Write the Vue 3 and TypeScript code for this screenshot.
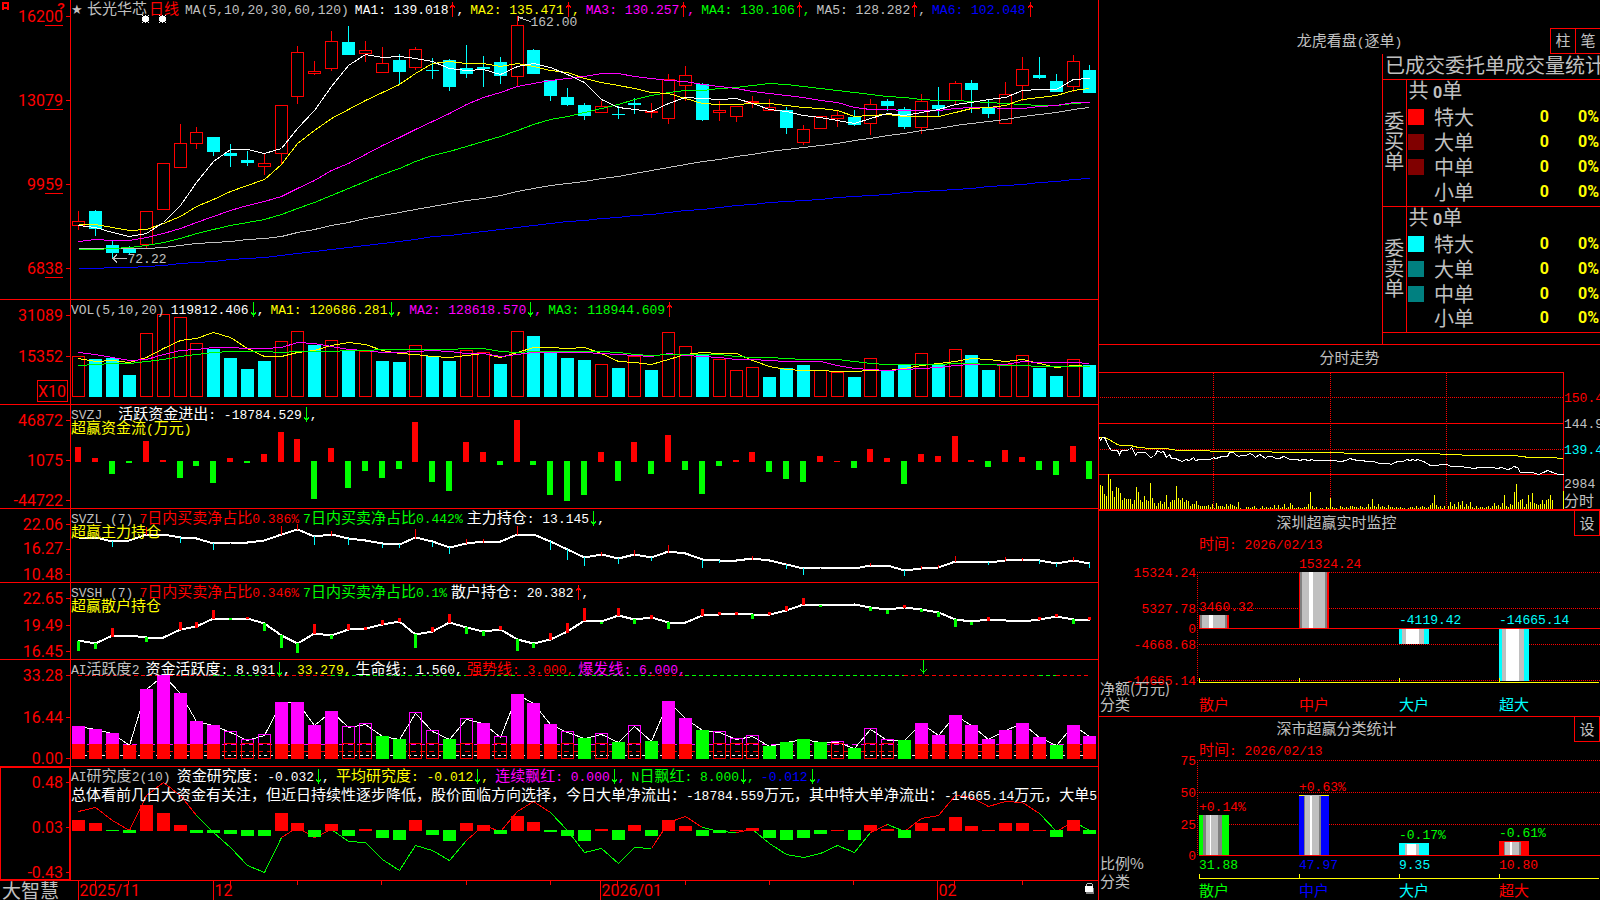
<script setup lang="ts">
import { h } from 'vue'

type Seg = { t: string; c: string; a?: 'up' | 'down'; comma?: boolean }
type Shape = { x: number; y: number; w: number; h: number; f: string; s?: string }
type Line = { p: string; c: string; w?: number; d?: string }
type Tick = { y: number; t: string; u?: boolean }
interface Panel {
  id: string
  top: number
  height: number
  title: string
  gap?: boolean
  segs: Seg[]
  sub?: string
  note?: string
  ticks: Tick[]
  under: Line[]
  shapes: Shape[]
  over: Line[]
}

const RED = '#ff0000'
const CYAN = '#00ffff'
const GREEN = '#00ff00'
const YELLOW = '#ffff00'
const MAGENTA = '#ff00ff'
const BLUE = '#0000ff'
const WHITE = '#ffffff'
const SILVER = '#c0c0c0'
const GRAY = '#808080'

/* Splits a label into CJK and Latin runs, each with its own face and size. */
const Mixed = (props: { t: string }) =>
  (props.t.match(/[\u2e80-\uffef]+|[^\u2e80-\uffef]+/g) ?? []).map((run) =>
    h('span', { class: /[\u2e80-\uffef]/.test(run) ? 'run-cjk' : 'run-latin' }, run),
  )
Mixed.props = ['t']

const LEFT = 71
const PLOT = 1027
const xAt = (i: number) => Math.round(78.4 + 16.85 * i)
const nums = (s: string) => s.trim().split(/[\s,]+/).map(Number)
/* Series are kept on a grid of three steps per row; base is the first row. */
const row = (v: number, base: number) => Math.round(base + v / 3)
const path = (v: number[], base: number, from = 0) =>
  v.map((y, i) => `${xAt(i + from) + 0.5},${Math.floor(base + y / 3) + 0.5}`).join(' ')

/* ---------- candles ---------- */
const candles = `r 633 667 677 689|c 630 633 687 708|c 722 735 759 777|c 738 744 759 766|r 637 637 734 743|r 493 493 631 631|r 372 433 505 505|r 381 400 433 447|c 411 411 456 468|c 432 459 468 501|c 453 480 489 498|r 460 493 502 525|r 319 319 463 493|r 138 160 292 311|r 183 216 221 224|r 93 127 208 213|c 78 126 165 165|r 123 154 163 186|r 141 193 220 220|c 162 180 216 252|r 141 151 205 209|c 174 210 213 237|c 177 180 261 273|c 135 204 222 234|c 168 201 207 261|c 171 186 228 252|r 48 79 232 258|c 147 150 222 222|c 240 240 288 303|c 264 291 315 318|c 309 315 348 360|r 303 322 340 340|c 318 342 345 357|c 294 309 315 342|r 309 336 339 354|r 222 241 358 372|r 198 229 259 303|c 249 252 360 363|r 303 334 340 363|r 317 322 352 366|r 288 307 309 324|r 297 325 334 334|c 321 330 384 402|r 375 391 430 435|r 348 352 388 388|r 330 349 358 381|c 330 351 375 378|r 297 316 373 405|c 297 303 318 333|c 321 327 381 387|r 282 307 385 402|c 261 315 327 348|r 243 253 304 315|c 240 249 270 339|c 300 324 342 354|r 246 286 373 373|r 171 211 259 303|c 171 225 234 237|c 222 243 276 276|r 165 187 262 276|c 195 210 279 279`
const priceShapes: Shape[] = candles.split('|').flatMap((line, i) => {
  const [kind, ...rest] = line.split(' ')
  const [hi, top, bot, lo] = rest.map((v) => row(+v, 0))
  const x = xAt(i)
  if (kind === 'c') {
    return [
      { x, y: hi, w: 1, h: lo - hi, f: CYAN },
      { x: x - 6, y: top, w: 13, h: Math.max(1, bot - top), f: CYAN },
    ]
  }
  return [
    { x, y: hi, w: 1, h: top - hi, f: RED },
    { x, y: bot, w: 1, h: lo - bot, f: RED },
    { x: x - 5.5, y: top - 0.5, w: 12, h: Math.max(1, bot - top), f: 'none', s: RED },
  ]
})
const ma = [
  [WHITE, '676 682 696 710 699 667 615 546 485 448 448 460 445 385 332 260 196 163 172 169 175 184 205 211 208 222 198 190 203 223 247 297 322 328 334 310 292 295 298 295 311 328 334 346 352 361 370 355 340 346 337 328 314 307 299 292 270 268 268 238 235'],
  [YELLOW, '673 674 682 691 688 670 648 619 598 573 556 538 492 430 390 354 328 302 277 252 220 190 184 190 190 198 190 198 210 217 235 247 256 265 277 280 295 310 314 314 310 310 316 322 325 332 349 346 343 348 349 349 338 325 322 316 298 292 286 270 265'],
  [MAGENTA, '724 718 721 721 712 700 684 666 648 630 615 604 588 564 540 512 489 462 436 413 387 363 339 312 291 277 259 249 241 236 228 220 220 229 235 241 244 253 259 265 275 280 287 293 302 308 323 328 329 331 331 331 325 322 322 325 325 319 315 308 307'],
  [GREEN, '747 747 745 742 737 727 715 700 687 675 667 657 642 624 606 585 564 545 524 504 484 466 454 439 424 409 391 373 359 348 337 326 313 298 286 278 271 271 266 262 257 251 253 259 265 271 277 284 289 293 298 301 301 304 307 310 313 316 317 310 307'],
  [SILVER, '745 745 745 745 745 742 736 730 727 723 718 714 708 697 688 677 667 656 646 637 628 619 611 602 595 587 574 565 556 549 544 535 528 520 511 502 493 485 479 470 463 455 448 442 436 429 421 414 406 399 390 384 377 370 365 357 350 343 336 328 322'],
  [BLUE, '805 804 802 802 800 796 791 787 783 778 775 771 765 759 753 747 741 736 730 724 717 710 706 700 694 688 682 677 670 665 661 655 652 646 642 636 631 627 621 617 612 608 603 600 597 593 588 585 582 578 573 570 568 564 559 556 552 547 544 538 535'],
].reverse().map(([c, v]): Line => ({ c, p: path(nums(v), 0) }))

/* ---------- volume ---------- */
const vol = 'r202 c207 c204 c255 r133 r76 r85 r163 c177 c204 c237 c213 r157 r127 c165 r154 c180 r187 c213 c216 r169 c199 c213 r184 r190 c222 r127 c138 c184 c204 c210 r226 c234 r202 c240 r130 r172 c195 r211 r244 r235 c261 c234 c225 r244 r250 c261 r208 c240 c223 r193 c223 r181 c195 c240 r226 r199 c234 c258 r211 c225'
const volShapes: Shape[] = vol.split(' ').map((s, i) => {
  const y = row(+s.slice(1), 290)
  const x = xAt(i)
  return s[0] === 'c'
    ? { x: x - 6, y, w: 13, h: 397 - y, f: CYAN }
    : { x: x - 5.5, y: y - 0.5, w: 12, h: 397 - y, f: 'none', s: RED }
})
const volLines = [
  [YELLOW, '205 213 211 216 203 175 152 145 127 142 175 198 200 187 182 165 157 163 180 190 193 199 202 196 190 202 187 173 172 175 172 190 213 217 223 208 194 187 190 191 212 230 238 241 241 244 244 241 242 236 226 220 214 205 208 214 208 220 233 226 228'],
  [MAGENTA, '187 193 203 212 207 192 182 178 173 173 176 176 172 158 160 168 178 182 186 188 183 181 185 190 190 200 193 187 186 186 186 190 194 196 199 190 196 198 203 208 209 212 214 214 214 226 235 238 241 238 235 232 226 223 222 222 214 217 217 217 220'],
  [GREEN, '226 222 219 220 213 207 199 193 187 184 184 184 188 185 184 184 181 181 178 178 178 178 178 175 175 184 187 185 184 184 184 184 187 193 196 193 193 193 194 198 201 203 204 207 208 209 214 220 223 223 223 223 220 220 223 226 226 228 229 229 229'],
].map(([c, v]): Line => ({ c, p: path(nums(v), 290) }))

/* ---------- money flow ---------- */
const flow: Shape[] = nums('471 504 552 519 453 510 564 528 579 504 519 492 426 447 627 474 594 543 564 537 396 576 603 456 486 525 390 525 615 633 615 486 573 456 552 435 540 612 528 510 486 546 567 576 498 513 534 477 504 582 492 498 438 510 531 480 501 540 555 468 567').map((v, i) => {
  const y = row(v, 290)
  const x = xAt(i) - 3
  return v < 515 ? { x, y, w: 6, h: 462 - y, f: RED } : { x, y: 461, w: 6, h: y - 461, f: GREEN }
})

/* ---------- holdings ---------- */
const stems = (s: string, line: number[], base: number, w: number, down: string): Shape[] =>
  s.split(' ').map((e) => {
    const [i, v] = e.split(':').map(Number)
    const a = row(v, base)
    const b = row(line[i], base)
    return { x: xAt(i) - (w >> 1), y: Math.min(a, b), w, h: Math.abs(a - b) + 1, f: a < b ? RED : down }
  })
const major = nums('741 742 754 752 733 733 742 745 760 758 756 752 732 718 738 734 745 751 761 763 743 755 772 760 755 755 733 733 753 778 801 794 804 794 802 785 790 809 810 811 806 810 823 834 831 832 834 825 825 840 835 832 813 814 817 810 809 810 820 811 819')
const majorStems = stems('2:768 4:712 6:755 8:777 12:708 13:702 14:761 15:723 16:761 18:770 19:771 20:717 21:767 22:789 23:747 24:747 26:708 28:777 29:807 30:825 31:786 32:819 33:780 34:810 35:765 37:831 38:815 40:798 42:819 42:834 43:852 47:819 49:855 50:828 51:825 52:798 54:822 55:801 56:804 57:818 58:828 59:801 60:831', major, 290, 1, CYAN)
const retail = nums('212 219 197 196 201 201 178 170 145 145 145 160 195 220 190 195 177 176 163 153 192 184 157 172 184 178 208 220 207 185 150 155 136 147 143 156 156 136 132 131 133 133 121 102 104 105 104 112 119 112 118 127 147 155 149 151 153 148 139 147 147')
const retailStems = stems('0:240 1:234 2:174 4:213 6:156 7:156 8:120 9:148 10:142 11:180 12:231 13:246 14:162 15:204 16:162 17:171 18:150 19:144 20:231 21:171 22:132 23:189 24:195 25:168 26:240 27:231 28:189 29:159 30:114 31:159 32:114 33:159 34:135 35:174 37:117 38:126 39:126 40:144 41:126 42:108 43:84 44:108 47:120 48:129 49:105 50:123 51:138 52:168 53:162 54:141 57:141 58:132 59:159 60:141', retail, 570, 3, GREEN)

/* ---------- activity ---------- */
const act = 'M468 M477 M489 M525 M357 M315 M369 M453 M465 H487 H511 H496 M396 M396 M465 M423 H472 H463 G498 G507 H430 H484 G507 H448 M459 H502 M372 M399 M462 H487 G504 H493 G516 H469 G513 M393 M444 G480 H487 H508 H499 G528 G516 G507 G516 H517 G534 H478 H511 G510 M459 M495 M435 M465 M507 M480 M459 M501 G525 M465 M498'.split(' ')
const SPLIT = 744
const FLOOR = 759
const actShapes: Shape[] = act.flatMap((s, i): Shape[] => {
  const y = row(+s.slice(1), 570)
  const x = xAt(i) - 6
  if (s[0] === 'G') return [{ x, y, w: 13, h: FLOOR - y, f: GREEN }]
  if (s[0] === 'M') {
    const mid = Math.max(y, SPLIT)
    return [
      { x, y, w: 13, h: mid - y, f: MAGENTA },
      { x, y: mid, w: 13, h: FLOOR - mid, f: RED },
    ]
  }
  return [
    { x: x + 0.5, y: y - 0.5, w: 12, h: SPLIT - y, f: 'none', s: MAGENTA },
    { x: x + 0.5, y: SPLIT - 0.5, w: 12, h: FLOOR - SPLIT, f: 'none', s: RED },
  ]
})
const span = (a: number, b: number, y: number) => `${xAt(a)},${y + 0.5} ${xAt(b)},${y + 0.5}`
const capStops: [number, number, string][] = [
  [0, 8, RED], [8, 11, GREEN], [11, 15, RED], [15, 23, GREEN], [23, 24, RED], [24, 26, GREEN], [26, 28, RED],
  [28, 34, GREEN], [34, 36, RED], [36, 49, GREEN], [49, 57, RED], [57, 58, GREEN], [58, 60, RED],
]
const actUnder: Line[] = [
  { c: MAGENTA, p: span(0, 60, 744), d: '5 4' },
  { c: RED, p: span(0, 60, 751), d: '5 4' },
  { c: WHITE, p: span(0, 60, 755), d: '3 3' },
  ...capStops.map(([a, b, c]): Line => ({ c, p: span(a, b, 675), d: '4 3' })),
  { c: WHITE, p: path(act.map((s) => +s.slice(1)), 570) },
]

/* ---------- research ---------- */
const research: Shape[] = nums('750 759 783 789 705 729 765 789 789 792 798 798 729 759 801 762 798 777 804 810 750 795 813 759 765 792 738 756 786 798 813 777 810 765 798 750 768 798 789 780 774 804 810 804 792 780 810 765 777 804 759 774 741 768 780 759 759 780 801 750 792').map((v, i) => {
  const y = row(v, 570)
  const x = xAt(i) - 6
  return v < 782 ? { x, y, w: 13, h: 831 - y, f: RED } : { x, y: 830, w: 13, h: y - 830, f: GREEN }
})
const trend = nums('724 712 750 781 675 637 675 737 786 831 885 908 803 771 803 778 813 818 868 902 825 840 871 812 765 785 725 695 727 782 848 835 880 832 835 757 738 773 785 788 779 820 853 862 849 826 848 788 763 784 745 736 676 681 709 694 698 730 784 755 781')
const trendStops: [number, number, string][] = [
  [0, 7, RED], [7, 12, GREEN], [12, 15, RED], [15, 23, GREEN], [23, 28, RED], [28, 34, GREEN], [34, 37, RED], [37, 39, GREEN],
  [39, 40, RED], [40, 47, GREEN], [47, 48, RED], [48, 49, GREEN], [49, 57, RED], [57, 58, GREEN], [58, 59, RED], [59, 60, GREEN],
]
const trendLines = trendStops.map(([a, b, c]): Line => ({ c, p: path(trend.slice(a, b + 1), 570, a) }))

const panels: Panel[] = [
  {
    id: 'price', top: 0, height: 299, title: 'MA(5,10,20,30,60,120)',
    segs: [
      { t: 'MA1: 139.018', c: WHITE, a: 'up', comma: true },
      { t: 'MA2: 135.471', c: YELLOW, a: 'up', comma: true },
      { t: 'MA3: 130.257', c: MAGENTA, a: 'up', comma: true },
      { t: 'MA4: 130.106', c: GREEN, a: 'up', comma: true },
      { t: 'MA5: 128.282', c: SILVER, a: 'up', comma: true },
      { t: 'MA6: 102.048', c: BLUE, a: 'up' },
    ],
    ticks: [{ y: 16, t: '16200', u: true }, { y: 100, t: '13079', u: true }, { y: 184, t: '9959', u: true }, { y: 268, t: '6838', u: true }],
    under: [], shapes: priceShapes, over: ma,
  },
  {
    id: 'volume', top: 299, height: 105, title: 'VOL(5,10,20)',
    segs: [
      { t: '119812.406', c: WHITE, a: 'down', comma: true },
      { t: 'MA1: 120686.281', c: YELLOW, a: 'down', comma: true },
      { t: 'MA2: 128618.570', c: MAGENTA, a: 'down', comma: true },
      { t: 'MA3: 118944.609', c: GREEN, a: 'up' },
    ],
    ticks: [{ y: 315, t: '31089' }, { y: 356, t: '15352' }],
    under: [], shapes: volShapes, over: volLines,
  },
  {
    id: 'flow', top: 404, height: 104, title: 'SVZJ', gap: true,
    segs: [{ t: '活跃资金进出: -18784.529', c: WHITE, a: 'down', comma: true }],
    sub: '超赢资金流(万元)',
    ticks: [{ y: 420, t: '46872' }, { y: 460, t: '1075' }, { y: 500, t: '-44722' }],
    under: [], shapes: flow, over: [],
  },
  {
    id: 'major', top: 508, height: 74, title: 'SVZL (7)',
    segs: [
      { t: '7日内买卖净占比0.386%', c: RED },
      { t: '7日内买卖净占比0.442%', c: GREEN },
      { t: '主力持仓: 13.145', c: WHITE, a: 'down', comma: true },
    ],
    sub: '超赢主力持仓',
    ticks: [{ y: 524, t: '22.06' }, { y: 549, t: '16.27' }, { y: 574, t: '10.48' }],
    under: [{ c: WHITE, w: 2, p: path(major, 290) }], shapes: majorStems, over: [],
  },
  {
    id: 'retail', top: 582, height: 77, title: 'SVSH (7)',
    segs: [
      { t: '7日内买卖净占比0.346%', c: RED },
      { t: '7日内买卖净占比0.1%', c: GREEN },
      { t: '散户持仓: 20.382', c: WHITE, a: 'up', comma: true },
    ],
    sub: '超赢散户持仓',
    ticks: [{ y: 598, t: '22.65' }, { y: 625, t: '19.49' }, { y: 651, t: '16.45' }],
    under: [{ c: WHITE, w: 2, p: path(retail, 570) }], shapes: retailStems, over: [],
  },
  {
    id: 'activity', top: 659, height: 107, title: 'AI活跃度2',
    segs: [
      { t: '资金活跃度: 8.931', c: WHITE, a: 'down', comma: true },
      { t: '33.279,', c: YELLOW },
      { t: '生命线: 1.560,', c: WHITE },
      { t: '强势线: 3.000,', c: RED },
      { t: '爆发线: 6.000,', c: MAGENTA },
    ],
    ticks: [{ y: 675, t: '33.28' }, { y: 717, t: '16.44' }, { y: 758, t: '0.00' }],
    under: actUnder, shapes: actShapes, over: [],
  },
  {
    id: 'research', top: 766, height: 114, title: 'AI研究度2(10)',
    segs: [
      { t: '资金研究度: -0.032', c: WHITE, a: 'down', comma: true },
      { t: '平均研究度: -0.012', c: YELLOW, a: 'down', comma: true },
      { t: '连续飘红: 0.000', c: MAGENTA, a: 'down', comma: true },
      { t: 'N日飘红: 8.000', c: GREEN, a: 'down', comma: true },
      { t: '-0.012', c: BLUE, a: 'down', comma: true },
    ],
    note: '总体看前几日大资金有关注，但近日持续性逐步降低，股价面临方向选择，今日大单净流出：-18784.559万元，其中特大单净流出：-14665.14万元，大单5',
    ticks: [{ y: 782, t: '0.48' }, { y: 827, t: '0.03' }, { y: 872, t: '-0.43' }],
    under: trendLines, shapes: research, over: [],
  },
]
const inner = (p: Panel) => (p.top ? p.top + 1 : 0)
const innerH = (p: Panel) => (p.top ? p.height - 1 : p.height)
const box = (p: Panel) => `${LEFT} ${inner(p)} ${PLOT} ${innerH(p)}`
const pctY = (p: Panel, y: number) => `${((y + 0.5 - inner(p)) / innerH(p)) * 100}%`
const pctX = (x: number) => `${((x + 0.5 - LEFT) / PLOT) * 100}%`

const months = [{ x: 78, t: '2025/11' }, { x: 213, t: '12' }, { x: 600, t: '2026/01' }, { x: 937, t: '02' }]
const weeks = [95, 128, 230, 297, 381, 466, 550, 617, 685, 769, 853, 954, 1022]

/* ---------- order statistics ---------- */
const sides = [
  { name: '委买单', rows: [['特大', '#ff0000'], ['大单', '#800000'], ['中单', '#800000'], ['小单', '#000000']] },
  { name: '委卖单', rows: [['特大', '#00ffff'], ['大单', '#008080'], ['中单', '#008080'], ['小单', '#000000']] },
]

/* ---------- intraday ---------- */
const pairs = (s: string) => s.split(' ').map((q) => {
  const [x, y] = q.split(',').map(Number)
  return `${Math.round(x / 3 - 9) + 0.5},${Math.floor(y / 3 - 5) + 0.5}`
}).join(' ')
const dayPrice = pairs('27,293 30,300 35,293 42,293 48,304 55,320 62,331 80,331 86,344 92,332 108,331 116,328 123,321 130,332 136,346 142,338 165,338 172,344 180,352 188,350 196,342 202,332 210,336 220,334 228,352 236,344 244,354 256,356 266,361 276,364 284,358 298,360 308,352 314,361 326,358 360,357 370,353 376,356 386,352 392,350 412,350 418,338 428,338 434,342 444,349 452,346 466,345 480,340 490,347 496,352 506,344 514,345 524,354 532,348 546,349 554,356 568,354 580,349 600,358 620,358 628,361 640,358 656,362 664,358 672,362 720,362 730,361 750,364 768,362 778,355 800,361 820,361 826,364 850,364 866,369 895,370 902,373 912,368 925,364 940,364 948,358 960,360 966,357 976,361 982,358 1000,364 1020,375 1040,376 1050,373 1070,373 1080,379 1110,380 1130,383 1152,386 1165,382 1205,382 1220,385 1234,382 1250,388 1262,384 1268,379 1282,383 1290,397 1326,398 1345,403 1360,397 1372,392 1395,400 1405,403 1419,403')
const dayAverage = pairs('27,292 46,292 60,302 80,313 90,316 120,317 145,321 180,325 228,326 262,330 318,332 400,334 540,334 548,337 757,337 765,340 1018,341 1145,345 1270,347 1318,351 1378,353 1419,356')
const dayVolume = nums(`24 23 15 13 35 30 18 12 22 21 16 9 11 10 10 10 5 9 22 17 9 7 13 9 8 26 11 6 3 6 8 5 7 14 2 7
 9 9 23 11 9 11 7 9 8 3 5 5 8 4 3 3 3 3 4 2 5 1 6 3 3 3 2 5 3 5 4 3 2 7 1 0 0 2 2 1 2 3 1 0 1 3 1 2 1 2 1 4 1 4 1 2 5 1
 2 6 4 1 1 2 1 1 2 2 5 17 3 1 2 0 1 1 0 2 1 11 2 1 1 0 3 2 1 2 1 3 3 2 2 1 3 2 1 2 5 2 10 3 2 5 2 3 2 1 4 2 2 1 2 1 2 1 1
 0 1 2 2 1 3 1 2 3 2 1 2 4 6 14 4 2 3 1 3 0 3 7 3 5 2 7 4 8 2 5 3 7 2 1 3 1 2 2 1 2 3 1 3 6 3 4 2 6 14 3 2 5 4 17 25 7
 9 10 2 5 14 7 16 6 5 4 5 9 5 9 10 14 9`)

/* ---------- category bars ---------- */
const K: Record<string, string> = { r: RED, g: GRAY, s: SILVER, w: WHITE, c: CYAN, n: GREEN, b: BLUE }
const stripes = (spec: string, x: number, y: number, hgt: number): Shape[] => {
  let at = x
  return spec.split(' ').map((q) => {
    const w = +q.slice(1)
    const out = { x: at, y, w, h: hgt, f: K[q[0]] }
    at += w
    return out
  })
}
const netBars = [
  ...stripes('r1 g2 s7 w4 s12 g2 r2', 100, 75, 13),
  ...stripes('r1 g2 s7 w4 s12 g2 r2', 200, 32, 56),
  ...stripes('c3 s4 w13 s5 c5', 300, 89, 15),
  ...stripes('c3 s4 w13 s5 c5', 400, 89, 52),
]
const ratioBars = [
  ...stripes('n4 g3 s4 w1 s7 g4 n7', 100, 63, 40),
  ...stripes('b5 g1 s5 w2 s7 g2 b8', 200, 43, 60),
  ...stripes('c6 s2 w9 s3 c10', 300, 91, 12),
  ...stripes('r5 g1 s5 w2 s7 g2 r8', 400, 89, 14),
  { x: 200, y: 43, w: 30, h: 1, f: YELLOW },
  { x: 205, y: 43, w: 17, h: 1, f: SILVER },
  { x: 300, y: 91, w: 30, h: 1, f: CYAN },
  { x: 400, y: 89, w: 30, h: 1, f: RED },
]
const cats = ['散户', '中户', '大户', '超大']
const boards = [
  {
    id: 'net', title: '深圳超赢实时监控', h: 175, axis: 142, zero: 88, catY: 170,
    scale: [[33, '15324.24'], [69, '5327.78'], [89, '0'], [105, '-4668.68'], [141, '-14665.14']] as [number, string][],
    grid: [32, 68, 104, 140], foot: 140, bars: netBars,
    labels: [[100, 67, '3460.32', RED], [200, 24, '15324.24', RED], [300, 80, '-4119.42', CYAN], [400, 80, '-14665.14', CYAN]] as [number, number, string, string][],
    colors: [RED, RED, CYAN, CYAN], caption: '净额(万元)', caps: [154, 170],
  },
  {
    id: 'ratio', title: '深市超赢分类统计', h: 148, axis: 126, zero: 103, catY: 144,
    scale: [[9, '75'], [41, '50'], [73, '25'], [104, '0']] as [number, string][],
    grid: [8, 40, 72], foot: 103, bars: ratioBars,
    labels: [
      [100, 55, '+0.14%', RED], [200, 35, '+0.63%', RED], [300, 83, '-0.17%', GREEN], [400, 81, '-0.61%', GREEN],
      [100, 113, '31.88', GREEN], [200, 113, '47.97', BLUE], [300, 113, '9.35', CYAN], [400, 113, '10.80', RED],
    ] as [number, number, string, string][],
    colors: [GREEN, BLUE, CYAN, RED], caption: '比例%', caps: [117, 135],
  },
]
</script>

<template>
  <main class="terminal">
    <section class="charts" aria-label="长光华芯 日线">
      <article v-for="p in panels" :key="p.id" class="panel" :class="p.id">
        <svg class="axis">
          <g v-for="k in p.ticks" :key="k.t">
            <text x="63" :y="pctY(p, k.y)" dy="5" class="axis-text end">{{ k.t }}</text>
            <line x1="66" x2="70" :y1="pctY(p, k.y)" :y2="pctY(p, k.y)" class="red" />
            <line v-if="k.u" x1="45" x2="63" :y1="pctY(p, k.y + 9)" :y2="pctY(p, k.y + 9)" class="red" />
          </g>
          <g v-if="p.id === 'price'">
            <path d="M2.5 2.5h6v6h-6zM3.5 3.5h4v4h-4zM2 9.500h2M7 9.500h2" class="red" />
            <text x="61" y="12" class="help">?</text>
          </g>
          <g v-if="p.id === 'volume'">
            <rect x="37.500" y="80.500" width="30" height="21" class="red" />
            <text x="66" y="97" class="axis-text end">X10</text>
          </g>
        </svg>
        <div class="plot">
          <svg class="canvas" :viewBox="box(p)" preserveAspectRatio="none">
            <polyline v-for="(l, i) in p.under" :key="'u' + i" :points="l.p" :stroke="l.c" :stroke-width="l.w ?? 1" :stroke-dasharray="l.d" />
            <rect v-for="(s, i) in p.shapes" :key="'s' + i" :x="s.x" :y="s.y" :width="s.w" :height="s.h" :fill="s.f" :stroke="s.s ?? 'none'" />
            <polyline v-for="(l, i) in p.over" :key="'o' + i" :points="l.p" :stroke="l.c" :stroke-width="l.w ?? 1" />
            <g v-if="p.id === 'price'">
              <path d="M531 21.500L518 17.500M518 16v5M518 17.500h5M127 258.500H113M117 254.500l-4 4l4 4" stroke="#c0c0c0" fill="none" />
              <path d="M143 16h5v6h-5zM142 17h7v4h-7zM142 15h1v1h-1zM148 15h1v1h-1zM142 22h1v1h-1zM148 22h1v1h-1zM145 15h1v8h-1z" fill="#fff" />
              <path d="M160 16h5v6h-5zM159 17h7v4h-7zM159 15h1v1h-1zM165 15h1v1h-1zM159 22h1v1h-1zM165 22h1v1h-1zM162 15h1v8h-1z" fill="#fff" />
            </g>
            <path v-if="p.id === 'activity'" d="M923.500 660v14M920.500 669.500l3 3l3 -3M922.500 671h2" stroke="#00ff00" fill="none" />
          </svg>
          <template v-if="p.id === 'price'">
            <span class="mark" :style="{ left: pctX(530), top: pctY(p, 22) }">162.00</span>
            <span class="mark" :style="{ left: pctX(127), top: pctY(p, 259) }">72.22</span>
          </template>
          <header class="legend">
            <template v-if="p.id === 'price'">
              <span class="star">★</span><span class="name">长光华芯<b>日线</b></span>
            </template>
            <h2 :class="{ wide: p.gap }"><Mixed :t="p.title" /></h2>
            <span v-for="s in p.segs" :key="s.t" class="seg" :class="{ plain: !s.a }" :style="{ color: s.c }">
              <span><Mixed :t="s.t" /></span>
              <svg v-if="s.a" class="arrow" viewBox="0 0 8 15">
                <path v-if="s.a === 'up'" d="M4.500 0v15M3 3.500h3M2 4.500h5M2.500 5v1M6.500 5v1" stroke="#ff0000" />
                <path v-else d="M4.500 0v15M3 12.500h3M2 11.500h5M2.500 10v1M6.500 10v1" stroke="#00ff00" />
              </svg>
              <span v-if="s.comma" class="run-latin">,</span>
            </span>
          </header>
          <p v-if="p.sub" class="sub"><Mixed :t="p.sub" /></p>
          <p v-if="p.note" class="note"><Mixed :t="p.note" /></p>
        </div>
      </article>
      <footer class="timeline">
        <span class="brand">大智慧</span>
        <div class="dates">
          <svg class="canvas">
            <line v-for="w in weeks" :key="w" :x1="pctX(w)" :x2="pctX(w)" y1="0" y2="4" class="red" />
            <g v-for="m in months" :key="m.x">
              <line :x1="pctX(m.x)" :x2="pctX(m.x)" y1="0" y2="100%" class="red" />
              <text :x="pctX(m.x)" dx="1" y="15" class="axis-text">{{ m.t }}</text>
            </g>
          </svg>
          <button class="lock" aria-label="锁定">
            <svg viewBox="0 0 11 12">
              <path d="M2.500 5V2.500L4 1h3l1.500 1.500V5" fill="none" stroke="#c0c0c0" />
              <path d="M2 6h8v6H2z" fill="#808080" />
              <path d="M1 4h8v6H1z" fill="#fff" />
            </svg>
          </button>
        </div>
      </footer>
    </section>

    <aside class="side">
      <section class="orders">
        <h2 class="title"><Mixed t="龙虎看盘(逐单)" /></h2>
        <div class="modes"><button>柱</button><button>笔</button></div>
        <div class="stats">
          <h3>已成交委托单成交量统计</h3>
          <table>
            <colgroup>
              <col class="c-side" /><col class="c-swatch" /><col class="c-kind" /><col class="c-count" /><col />
            </colgroup>
            <tbody v-for="s in sides" :key="s.name">
              <tr>
                <th class="vert" rowspan="5" scope="rowgroup">{{ s.name }}</th>
                <td colspan="4" class="total">共 <b>0</b>单</td>
              </tr>
              <tr v-for="r in s.rows" :key="r[0]">
                <td><i class="swatch" :style="{ background: r[1] }"></i></td>
                <th scope="row" class="kind">{{ r[0] }}</th>
                <td class="num">0</td>
                <td class="num">0%</td>
              </tr>
            </tbody>
          </table>
        </div>
      </section>

      <section class="intraday">
        <h2 class="title">分时走势</h2>
        <svg class="day" viewBox="0 0 501 138">
          <path d="M0 .5H464.500V138M0 51.500H464M0 102.500H464M0 137.500H501" class="red" />
          <path d="M1 25.500H464M1 77.500H464M114.500 1V138M231.500 1V138M347.500 1V138" class="red dots" />
          <g transform="translate(0 -28)">
            <rect v-for="(v, i) in dayVolume" :key="i" :x="1 + i * 2" :y="165 - v" width="1" :height="v" fill="#ffff00" />
            <rect x="464" y="147" width="1" height="18" fill="#ffff00" />
            <polyline :points="dayAverage" stroke="#ffff00" transform="translate(0 1)" />
            <polyline :points="dayPrice" stroke="#ffffff" transform="translate(0 1)" />
          </g>
          <text x="465" y="30" class="lat" fill="#ff0000">150.4</text>
          <text x="465" y="56" class="lat" fill="#c0c0c0">144.9</text>
          <text x="465" y="82" class="lat" fill="#00ffff">139.4</text>
          <text x="465" y="116" class="lat" fill="#c0c0c0">2984</text>
          <text x="465" y="134" class="cjk" fill="#c0c0c0">分时</text>
        </svg>
      </section>

      <section v-for="b in boards" :key="b.id" class="board" :class="b.id">
        <div class="head">
          <h2>{{ b.title }}</h2>
          <button>设</button>
        </div>
        <p class="time"><Mixed t="时间: 2026/02/13" /></p>
        <svg class="bars" :viewBox="`0 0 501 ${b.h}`" :height="b.h">
          <path :d="b.grid.map((g) => `M98 ${g + 0.5}H501`).join('') + `M98.500 ${b.grid[0]}V${b.foot}`" class="red dots" />
          <text v-for="l in b.scale" :key="l[1]" x="97" :y="l[0] + 4" class="lat end" fill="#ff0000">{{ l[1] }}</text>
          <text v-for="l in b.labels" :key="l[2]" :x="l[0]" :y="l[1] + 4" class="lat" :fill="l[3]">{{ l[2] }}</text>
          <rect v-for="(s, i) in b.bars" :key="i" :x="s.x" :y="s.y" :width="s.w" :height="s.h" :fill="s.f" />
          <path :d="`M100 ${b.zero + 0.5}H501`" class="red" />
          <path :d="`M100 ${b.axis + 0.5}H500M100.500 ${b.axis - 4}v4M200.500 ${b.axis - 4}v4M300.500 ${b.axis - 4}v4M400.500 ${b.axis - 4}v4`" stroke="#ffff00" />
          <text v-for="(c, i) in cats" :key="c" :x="100 + i * 100" :y="b.catY" class="cjk" :fill="b.colors[i]">{{ c }}</text>
          <text x="1" :y="b.caps[0]" class="cjk" fill="#c0c0c0">{{ b.caption }}</text>
          <text x="1" :y="b.caps[1]" class="cjk" fill="#c0c0c0">分类</text>
        </svg>
      </section>
    </aside>
  </main>
</template>

<style>
body {
  background: #000;
}
.run-cjk {
  font-size: 15px;
}
.run-latin {
  font-family: 'Liberation Mono', monospace;
  font-size: 13px;
}
</style>

<style scoped>
.terminal {
  display: grid;
  grid-template-columns: minmax(0, 1fr) 501px;
  grid-template-rows: minmax(0, 1fr);
  height: 100vh;
  overflow: hidden;
  background: #000;
  color: #c0c0c0;
  font-family: 'Noto Sans CJK SC', sans-serif;
  font-size: 15px;
  font-weight: 400;
}
h2,
h3,
p {
  margin: 0;
  font-size: 15px;
  font-weight: 400;
}
button {
  padding: 0 0 2px;
  border: 1px solid #f00;
  background: #000;
  color: #c0c0c0;
  font: inherit;
}
svg {
  display: block;
  shape-rendering: crispEdges;
}
polyline {
  fill: none;
}
.red {
  fill: none;
  stroke: #f00;
}
.dots {
  stroke-dasharray: 1 1;
}
.charts {
  display: grid;
  grid-template-rows:
    minmax(0, 299fr) minmax(0, 105fr) minmax(0, 104fr) minmax(0, 74fr) minmax(0, 77fr)
    minmax(0, 107fr) minmax(0, 114fr) minmax(0, 20fr);
  min-width: 0;
  border-right: 1px solid #f00;
}
.panel {
  display: grid;
  grid-template-columns: 70px minmax(0, 1fr);
  grid-template-rows: minmax(0, 1fr);
  min-height: 0;
  border-top: 1px solid #f00;
}
.panel.price {
  border-top: 0;
}
.axis {
  width: 70px;
  height: 100%;
  overflow: visible;
}
.research .axis {
  outline: 1px solid #f00;
  outline-offset: -1px;
}
.axis-text {
  fill: #f00;
  font-family: Roboto, sans-serif;
  font-size: 16px;
  font-weight: 400;
}
.end {
  text-anchor: end;
}
.help {
  fill: #f00;
  font-family: 'Liberation Sans', sans-serif;
  font-size: 13px;
  font-weight: 700;
  text-anchor: middle;
}
.plot {
  position: relative;
  min-width: 0;
  min-height: 0;
  overflow: hidden;
  border-left: 1px solid #f00;
}
.canvas {
  position: absolute;
  inset: 0;
  width: 100%;
  height: 100%;
}
.mark {
  position: absolute;
  font-family: 'Liberation Mono', monospace;
  font-size: 13px;
  line-height: 16px;
  margin-top: -8px;
}
.legend {
  position: relative;
  display: flex;
  align-items: baseline;
  gap: 6px;
  height: 15px;
  line-height: 15px;
  white-space: pre;
}
.legend h2 {
  line-height: 15px;
}
.legend h2.wide {
  margin-right: 10px;
}
.star {
  width: 10px;
  font-family: 'DejaVu Sans', sans-serif;
  font-size: 13px;
}
.name b {
  margin-left: 2px;
  color: #f00;
  font-weight: 400;
}
.seg {
  display: flex;
  align-items: baseline;
}
.plain {
  margin-right: -2px;
}
.arrow {
  align-self: center;
  width: 8px;
  height: 15px;
}
.sub,
.note {
  position: relative;
  line-height: 15px;
  white-space: pre;
}
.sub {
  margin-top: -1px;
  color: #ff0;
}
.note {
  margin-top: 4px;
  color: #fff;
}
.timeline {
  display: grid;
  grid-template-columns: 70px minmax(0, 1fr);
  grid-template-rows: minmax(0, 1fr);
  border-top: 1px solid #f00;
}
.brand {
  padding-left: 2px;
  font-size: 19px;
  line-height: 17px;
}
.dates {
  position: relative;
  margin-left: 1px;
}
.lock {
  position: absolute;
  top: 1px;
  right: 3px;
  width: 11px;
  height: 12px;
  padding: 0;
  border: 0;
}
.side {
  display: grid;
  grid-template-rows: minmax(0, 344fr) minmax(0, 166fr) minmax(0, 206fr) minmax(0, 184fr);
  min-width: 0;
}
.side > section {
  position: relative;
  min-height: 0;
  overflow: hidden;
}
.side > section + section {
  border-top: 1px solid #f00;
}
.title {
  text-align: center;
}
.side .orders {
  display: flex;
  flex-direction: column;
}
.orders .title {
  box-sizing: border-box;
  height: 54px;
  padding-top: 32px;
  line-height: 16px;
}
.modes {
  position: absolute;
  top: 28px;
  right: -1px;
  display: flex;
}
.modes button {
  width: 26px;
  height: 26px;
  line-height: 20px;
}
.modes button + button {
  margin-left: -1px;
}
.stats {
  flex: 1;
  width: 217px;
  margin-left: auto;
  overflow: hidden;
  border-left: 1px solid #f00;
}
.stats h3 {
  height: 26px;
  padding-left: 2px;
  border-bottom: 1px solid #f00;
  box-sizing: border-box;
  font-size: 20px;
  line-height: 22px;
  white-space: nowrap;
  overflow: hidden;
}
table {
  width: 100%;
  border-collapse: collapse;
  table-layout: fixed;
  border-bottom: 1px solid #f00;
}
tbody + tbody {
  border-top: 1px solid #f00;
}
td,
th {
  box-sizing: border-box;
  height: 25px;
  padding: 0 0 3px;
  font-weight: 400;
  line-height: 20px;
}
.c-side {
  width: 23px;
}
.c-swatch {
  width: 28px;
}
.c-kind {
  width: 60px;
}
.c-count {
  width: 56px;
}
.vert {
  border-right: 1px solid #f00;
  font-size: 20px;
  text-align: center;
  word-break: break-all;
}
.total {
  padding-left: 2px;
  font-size: 20px;
}
.total b,
.num {
  font-family: Roboto, sans-serif;
  font-size: 16px;
  font-weight: 700;
}
.swatch {
  display: block;
  width: 16px;
  height: 16px;
  margin-left: 1px;
}
.kind {
  font-size: 20px;
  text-align: left;
}
.num {
  padding-right: 1px;
  color: #ff0;
  text-align: right;
}
.intraday .title {
  height: 27px;
  line-height: 23px;
}
.day {
  width: 501px;
  height: 138px;
}
.lat {
  font-family: 'Liberation Mono', monospace;
  font-size: 13px;
  font-weight: 400;
}
.cjk {
  font-size: 15px;
}
.head {
  display: flex;
  height: 25px;
}
.head h2 {
  flex: 1;
  line-height: 22px;
  text-align: center;
}
.head button {
  width: 26px;
  border-top: 0;
}
.time {
  height: 5px;
  margin-top: -1px;
  padding-left: 100px;
  color: #f00;
  line-height: 15px;
  white-space: pre;
}
.ratio .time {
  height: 11px;
}
.bars {
  width: 501px;
}
</style>
